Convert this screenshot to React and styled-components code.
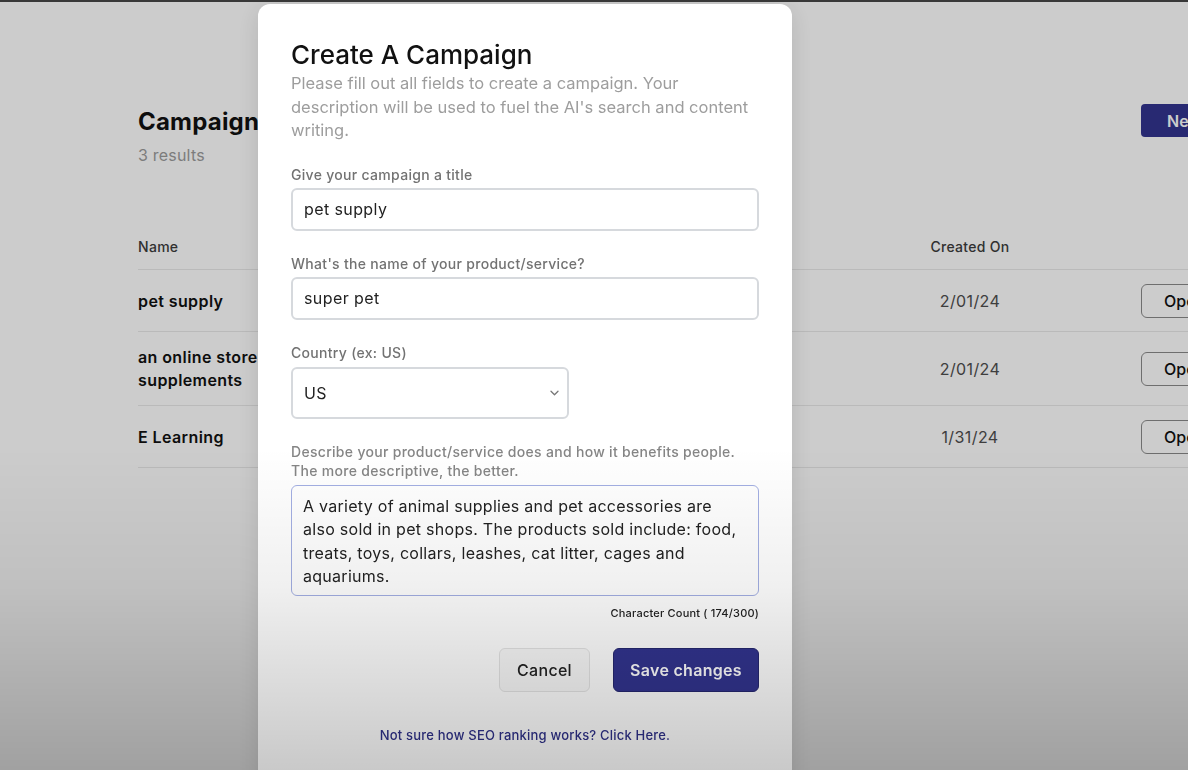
import { useState } from "react";
import styled, { createGlobalStyle } from "styled-components";

const GlobalStyle = createGlobalStyle`
	* {
		box-sizing: border-box;
	}
	html, body {
		margin: 0;
		padding: 0;
		height: 100%;
		overflow: hidden;
		background: #fff;
		font-family: Inter, "Noto Sans", "Liberation Sans", sans-serif;
		color: #111;
	}
	button, input, select, textarea {
		font-family: inherit;
	}
`;

const brand = "#32348f";

/* page behind the modal */

const Page = styled.main`
	width: 1300px;
	padding: 103px 0 0 138px;
`;

const PageInner = styled.div`
	width: 1143px;
`;

const PageHeader = styled.header`
	display: flex;
	justify-content: space-between;
	align-items: flex-start;
	margin-bottom: 58px;

	h1 {
		margin: 3px 0 0;
		font-size: 24px;
		line-height: 32px;
		font-weight: 700;
		letter-spacing: 0.2px;
	}
	p {
		margin: 5px 0 0;
		font-size: 16px;
		line-height: 24px;
		letter-spacing: 0.2px;
		color: #9c9c9c;
	}
`;

const NewButton = styled.button`
	width: 140px;
	height: 33px;
	margin-top: 1px;
	padding: 0 0 0 26px;
	text-align: left;
	white-space: nowrap;
	overflow: hidden;
	border: none;
	border-radius: 4px;
	background: ${brand};
	color: #fff;
	font-size: 16px;
	font-weight: 600;
`;

const Row = styled.div`
	display: grid;
	grid-template-columns: 762px 241px 140px;
	align-items: center;
	padding: 14px 0 13px;
	border-bottom: 1px solid #e9e9e9;
	font-size: 16px;
	line-height: 23px;
	letter-spacing: 0.4px;
`;

const HeadRow = styled(Row)`
	padding: 10px 0;
	font-size: 14px;
	line-height: 24px;
	font-weight: 500;
	letter-spacing: 0.3px;
	color: #3c3c3c;
`;

const NameCell = styled.div`
	max-width: 300px;
	font-weight: 600;
`;

const DateCell = styled.div`
	padding-right: 101px;
	text-align: center;
	color: ${(p) => (p.head ? "#3c3c3c" : "#4e4e4e")};
`;

const OpenButton = styled.button`
	width: 80px;
	height: 34px;
	padding: 0 0 0 22px;
	text-align: left;
	border: 1px solid #8a8a8a;
	border-radius: 6px;
	background: #fff;
	color: #111;
	font-size: 16px;
	font-weight: 500;
`;

/* modal */

const Backdrop = styled.div`
	position: fixed;
	inset: 0;
	display: flex;
	align-items: flex-start;
	padding: 4px 0 0 258px;
	background: rgba(0, 0, 0, 0.2);
`;

const ModalWrap = styled.article`
	width: 534px;
	padding: 35px 33px 60px;
	border-radius: 12px;
	background: #fff;
	box-shadow: 0 4px 24px rgba(0, 0, 0, 0.12);
`;

const ModalTitle = styled.h2`
	margin: 0;
	font-size: 26px;
	line-height: 32px;
	font-weight: 500;
	color: #111;
`;

const ModalDesc = styled.p`
	margin: 1px 0 0;
	font-size: 16.5px;
	line-height: 23.5px;
	color: #9d9d9d;
`;

const Field = styled.div`
	display: flex;
	flex-direction: column;
	margin-top: ${(p) => p.top || 23}px;

	label {
		margin-bottom: ${(p) => p.gap || 3}px;
		font-size: 14px;
		line-height: ${(p) => p.lh || 20}px;
		font-weight: 500;
		letter-spacing: 0.3px;
		color: ${(p) => p.tone || "#727272"};
	}
`;

const TextInput = styled.input`
	width: 100%;
	height: 43px;
	padding: 0 11px;
	border: 2px solid #d6d9dd;
	border-radius: 6px;
	background: #fff;
	font-size: 16px;
	letter-spacing: 0.4px;
	color: #222;
	outline: none;
`;

const SelectWrap = styled.div`
	position: relative;
	width: 278px;

	svg {
		position: absolute;
		right: 10px;
		top: 50%;
		transform: translateY(-50%);
		pointer-events: none;
	}
`;

const Select = styled.select`
	appearance: none;
	width: 100%;
	height: 52px;
	padding: 0 11px;
	border: 2px solid #d6d9dd;
	border-radius: 6px;
	background: #fff;
	font-size: 16px;
	letter-spacing: 0.4px;
	color: #222;
	outline: none;
`;

const TextArea = styled.textarea`
	width: 100%;
	height: 111px;
	padding: 9px 11px;
	border: 1.5px solid #a3afe3;
	border-radius: 6px;
	resize: none;
	font-size: 16px;
	line-height: 23.5px;
	letter-spacing: 0.28px;
	color: #222;
	outline: none;
	overflow: hidden;
`;

const CharCount = styled.div`
	margin-top: 10px;
	text-align: right;
	font-size: 11px;
	line-height: 14px;
	font-weight: 500;
	letter-spacing: 0.2px;
	color: #222;
`;

const ButtonArea = styled.div`
	display: flex;
	justify-content: flex-end;
	gap: 23px;
	margin-top: 28px;

	button {
		height: 44px;
		border-radius: 6px;
		font-size: 16px;
		letter-spacing: 0.3px;
	}
	.cancel {
		width: 91px;
		border: 1px solid #e4e4e4;
		background: #f9f9f9;
		color: #222;
		font-weight: 500;
	}
	.save {
		width: 146px;
		border: 1px solid #25276f;
		background: ${brand};
		color: #fff;
		font-weight: 600;
	}
`;

const HelpLink = styled.a`
	display: block;
	margin-top: 34px;
	text-align: center;
	font-size: 13px;
	line-height: 18px;
	font-weight: 500;
	letter-spacing: 0.2px;
	color: #2f318a;
	text-decoration: none;
`;

/* the video frame: dark top edge and a darker bottom */

const Vignette = styled.div`
	position: fixed;
	inset: 0;
	pointer-events: none;
	border-top: 2px solid #383838;
	background: linear-gradient(
		to bottom,
		rgba(0, 0, 0, 0) 0%,
		rgba(0, 0, 0, 0) 58%,
		rgba(0, 0, 0, 0.06) 76%,
		rgba(0, 0, 0, 0.21) 100%
	);
`;

const rows = [
	{ name: "pet supply", date: "2/01/24" },
	{ name: "an online store for vitamins and supplements", date: "2/01/24" },
	{ name: "E Learning", date: "1/31/24" },
];

const App = () => {
	const [title, setTitle] = useState("pet supply");
	const [product, setProduct] = useState("super pet");
	const [country, setCountry] = useState("US");
	const [desc, setDesc] = useState(
		"A variety of animal supplies and pet accessories are also sold in pet shops. The products sold include: food, treats, toys, collars, leashes, cat litter, cages and aquariums."
	);

	return (
		<>
			<GlobalStyle />
			<Page>
				<PageInner>
					<PageHeader>
						<div>
							<h1>Campaigns</h1>
							<p>3 results</p>
						</div>
						<NewButton>New Campaign</NewButton>
					</PageHeader>
					<HeadRow>
						<div>Name</div>
						<DateCell head>Created On</DateCell>
						<div />
					</HeadRow>
					{rows.map((el, idx) => (
						<Row key={idx}>
							<NameCell>{el.name}</NameCell>
							<DateCell>{el.date}</DateCell>
							<div>
								<OpenButton>Open</OpenButton>
							</div>
						</Row>
					))}
				</PageInner>
			</Page>

			<Backdrop>
				<ModalWrap>
					<ModalTitle>Create A Campaign</ModalTitle>
					<ModalDesc>
						Please fill out all fields to create a campaign. Your
						description will be used to fuel the AI's search and
						content writing.
					</ModalDesc>

					<Field top={22}>
						<label htmlFor="title">Give your campaign a title</label>
						<TextInput
							id="title"
							value={title}
							onChange={(e) => setTitle(e.target.value)}
						/>
					</Field>

					<Field>
						<label htmlFor="product">
							What's the name of your product/service?
						</label>
						<TextInput
							id="product"
							value={product}
							onChange={(e) => setProduct(e.target.value)}
						/>
					</Field>

					<Field gap={4}>
						<label htmlFor="country">Country (ex: US)</label>
						<SelectWrap>
							<Select
								id="country"
								value={country}
								onChange={(e) => setCountry(e.target.value)}
							>
								<option value="US">US</option>
								<option value="CA">CA</option>
								<option value="UK">UK</option>
							</Select>
							<svg width="9" height="6" viewBox="0 0 9 6" fill="none">
								<path
									d="M1 1.2l3.5 3.5L8 1.2"
									stroke="#777"
									strokeWidth="1.3"
									strokeLinecap="round"
									strokeLinejoin="round"
								/>
							</svg>
						</SelectWrap>
					</Field>

					<Field lh={19} gap={5} tone="#858585">
						<label htmlFor="desc">
							Describe your product/service does and how it benefits
							people. The more descriptive, the better.
						</label>
						<TextArea
							id="desc"
							value={desc}
							onChange={(e) => setDesc(e.target.value)}
						/>
					</Field>
					<CharCount>Character Count ( {desc.length}/300)</CharCount>

					<ButtonArea>
						<button className="cancel">Cancel</button>
						<button className="save">Save changes</button>
					</ButtonArea>

					<HelpLink href="#">
						Not sure how SEO ranking works? Click Here.
					</HelpLink>
				</ModalWrap>
			</Backdrop>
			<Vignette />
		</>
	);
};

export default App;
